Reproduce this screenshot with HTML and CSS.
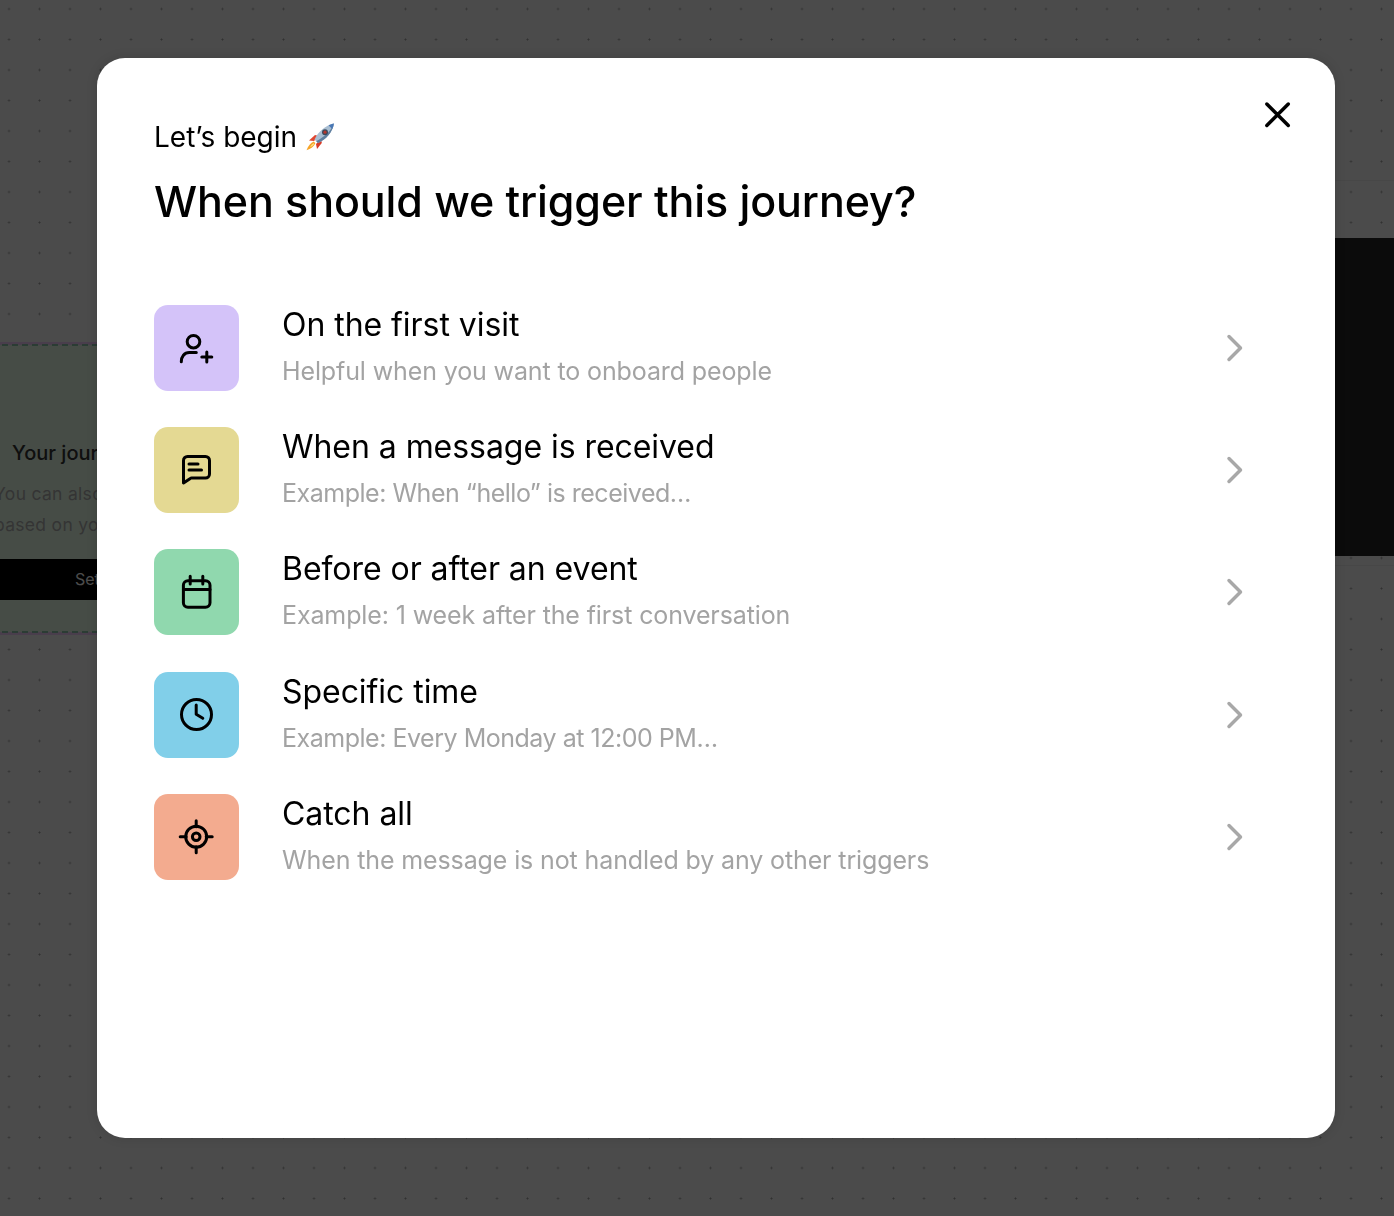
FILE: index.html
```html
<!DOCTYPE html>
<html lang="en">
<head>
    <meta charset="UTF-8">
    <meta name="viewport" content="width=device-width, initial-scale=1.0">
    <title>Journey trigger</title>
    <link rel="stylesheet" href="styles.css">
</head>
<body>
    <!-- Canvas behind the dialog -->
    <div class="canvas">
        <div class="journey-card">
            <h3>Your journey</h3>
            <p>You can also</p>
            <p class="second">based on your</p>
            <div class="setup-button">Set</div>
        </div>
        <div class="side-panel">
            <div class="side-panel-dark"></div>
        </div>
    </div>

    <div class="overlay">
        <div class="modal">
            <button class="close-button" aria-label="Close">
                <svg width="32" height="32" viewBox="0 0 32 32"><path d="M4.800 5l21.500 21.500M26.300 5L4.800 26.500"/></svg>
            </button>

            <p class="eyebrow">
                Let’s begin
                <svg class="rocket" width="30" height="30" viewBox="0 0 30 30">
                    <path d="M4 18.500l6-5.500 4 1-5 5z" fill="#e0452f"/>
                    <path d="M12 27l4.800-6 -.8-4-5 5z" fill="#d83b28"/>
                    <path d="M8.800 19.500c-3 1.300-5.800 4.300-7.300 8.800 4.300-1.200 7.500-4 8.900-7z" fill="#f7a428"/>
                    <path d="M8.700 21.300c-1.500.8-2.700 2-3.500 3.700 1.800-.7 3.100-1.800 3.900-3.100z" fill="#fde68a"/>
                    <path d="M9.500 17.500C13 10 20 3.500 29 1.500 27.500 10.500 21 17.500 13 21z" fill="#a9bed2"/>
                    <path d="M13 21c8-3.500 14.500-10.500 16-19.500-2 6-8 12.500-17.800 17.700z" fill="#5f7f9f"/>
                    <path d="M23.500 3.200c1.500-.7 3.700-1.300 5.500-1.700-.4 2-1 3.800-1.800 5.500z" fill="#4a78b5"/>
                    <circle cx="20" cy="10.200" r="3" fill="#3b4a5c"/>
                    <circle cx="20" cy="10.200" r="1.600" fill="#b5362c"/>
                </svg>
            </p>
            <h1>When should we trigger this journey?</h1>

            <div class="trigger-list">
                <a class="trigger" href="#">
                    <span class="trigger-icon purple">
                        <svg width="36" height="36" viewBox="0 0 36 36"><circle cx="15.500" cy="11.700" r="6.300"/><path d="M3.300 31.700c0-5 3-9.200 8-9.200h7M28.800 22v10M23.800 27h10"/></svg>
                    </span>
                    <span class="trigger-text">
                        <span class="trigger-title">On the first visit</span>
                        <span class="trigger-sub">Helpful when you want to onboard people</span>
                    </span>
                    <svg class="chevron" width="18" height="28" viewBox="0 0 18 28"><path d="M3 2.500l11.500 11.500L3 25.500"/></svg>
                </a>
                <a class="trigger" href="#">
                    <span class="trigger-icon yellow">
                        <svg width="36" height="36" viewBox="0 0 36 36"><path d="M5.500 31V8.500a4 4 0 0 1 4-4h18a4 4 0 0 1 4 4V22a4 4 0 0 1-4 4H13.500a2 2 0 0 0-1.200.4L5.500 31zM11 12h9M11 18h12.500"/></svg>
                    </span>
                    <span class="trigger-text">
                        <span class="trigger-title">When a message is received</span>
                        <span class="trigger-sub tight">Example: When “hello” is received…</span>
                    </span>
                    <svg class="chevron" width="18" height="28" viewBox="0 0 18 28"><path d="M3 2.500l11.500 11.500L3 25.500"/></svg>
                </a>
                <a class="trigger" href="#">
                    <span class="trigger-icon green">
                        <svg width="36" height="36" viewBox="0 0 36 36"><rect x="5.400" y="6.800" width="26.600" height="26.400" rx="4.500"/><path d="M12.200 2.200V10M24.800 2.200V10M5.400 15.500h26.600"/></svg>
                    </span>
                    <span class="trigger-text">
                        <span class="trigger-title">Before or after an event</span>
                        <span class="trigger-sub">Example: 1 week after the first conversation</span>
                    </span>
                    <svg class="chevron" width="18" height="28" viewBox="0 0 18 28"><path d="M3 2.500l11.500 11.500L3 25.500"/></svg>
                </a>
                <a class="trigger" href="#">
                    <span class="trigger-icon blue">
                        <svg width="36" height="36" viewBox="0 0 36 36"><circle cx="18.500" cy="17.500" r="15"/><path d="M18.200 8v9.300l6.600 4"/></svg>
                    </span>
                    <span class="trigger-text">
                        <span class="trigger-title">Specific time</span>
                        <span class="trigger-sub tight">Example: Every Monday at 12:00 PM…</span>
                    </span>
                    <svg class="chevron" width="18" height="28" viewBox="0 0 18 28"><path d="M3 2.500l11.500 11.500L3 25.500"/></svg>
                </a>
                <a class="trigger" href="#">
                    <span class="trigger-icon orange">
                        <svg width="36" height="36" viewBox="0 0 36 36"><circle cx="18.200" cy="17.700" r="10.500"/><circle cx="18.200" cy="17.700" r="3.800"/><path d="M18.200 1.700v6M18.200 27.700v6M2.200 17.700h6M28.200 17.700h6"/></svg>
                    </span>
                    <span class="trigger-text">
                        <span class="trigger-title">Catch all</span>
                        <span class="trigger-sub">When the message is not handled by any other triggers</span>
                    </span>
                    <svg class="chevron" width="18" height="28" viewBox="0 0 18 28"><path d="M3 2.500l11.500 11.500L3 25.500"/></svg>
                </a>
            </div>
        </div>
    </div>
</body>
</html>
```

FILE: styles.css
```css
* {
    box-sizing: border-box;
}
html, body {
    height: 100%;
}
body {
    margin: 0;
    overflow: hidden;
    font-family: Inter, "Liberation Sans", sans-serif;
    color: #000;
    background-color: #fbfbfb;
    background-image: radial-gradient(circle, #a4a4a4 0.8px, transparent 1.2px);
    background-size: 30.5px 30.5px;
    background-position: -6.25px -6.25px;
}

/* Things on the canvas, seen through the overlay */
.canvas {
    position: fixed;
    inset: 0;
}
.journey-card {
    position: absolute;
    left: -70px;
    top: 342px;
    width: 400px;
    height: 293px;
    padding: 96px 0 0 79px;
    background-color: #ecffec;
    border: 3px solid #f5d0ff;
    outline: 2px dashed #90c8b0;
    outline-offset: -4px;
}
.journey-card h3 {
    margin: 0 0 13px;
    font-size: 20px;
    font-weight: 500;
    color: #333;
}
.journey-card p {
    margin: 0 0 0 -18px;
    font-size: 17.500px;
    line-height: 31px;
    letter-spacing: 0.3px;
    color: #b0b0b0;
}
.setup-button {
    margin: 19px 0 0 -79px;
    height: 41px;
    padding-left: 142px;
    font-size: 16px;
    line-height: 41px;
    color: #fff;
    background-color: #000;
}
.side-panel {
    position: absolute;
    left: 1200px;
    top: 180px;
    right: 0;
    height: 386px;
    padding-top: 57px;
    border-top: 1px solid #eee;
    border-bottom: 1px solid #eee;
}
.side-panel-dark {
    height: 318px;
    background-color: #262626;
}

.overlay {
    position: fixed;
    inset: 0;
    padding: 58px 59px 78px 97px;
    background-color: rgba(0, 0, 0, 0.7);
}
.modal {
    position: relative;
    height: 100%;
    padding: 60px 57px 0;
    background-color: #fff;
    border-radius: 28px;
    box-shadow: 0 0 12px rgba(0, 0, 0, 0.12);
}
.close-button {
    position: absolute;
    top: 41px;
    right: 41px;
    padding: 0;
    border: none;
    background: none;
    line-height: 0;
    cursor: pointer;
}
.close-button path {
    fill: none;
    stroke: #000;
    stroke-width: 3.5;
    stroke-linecap: round;
}

.eyebrow {
    display: flex;
    align-items: center;
    gap: 8px;
    height: 38px;
    margin: 0;
    font-size: 28px;
}
h1 {
    margin: 14px 0 0;
    font-size: 43px;
    line-height: 62px;
    font-weight: 500;
    letter-spacing: -0.1px;
}

.trigger-list {
    display: flex;
    flex-direction: column;
    gap: 36.2px;
    margin-top: 73px;
}
.trigger {
    display: flex;
    align-items: center;
    height: 86px;
    color: inherit;
    text-decoration: none;
}
.trigger-icon {
    display: flex;
    justify-content: center;
    align-items: center;
    flex: none;
    width: 85px;
    height: 86px;
    border-radius: 14px;
}
.trigger-icon svg {
    margin-right: 2px;
    fill: none;
    stroke: #000;
    stroke-width: 3;
    stroke-linecap: round;
    stroke-linejoin: round;
}
.purple { background-color: #d4c3f9; }
.yellow { background-color: #e4d993; }
.green { background-color: #90d8ae; }
.blue { background-color: #81cfe9; }
.orange { background-color: #f3ab8f; }

.trigger-text {
    display: flex;
    flex-direction: column;
    flex: 1;
    gap: 8px;
    margin-left: 43px;
}
.trigger-title {
    font-size: 32px;
    line-height: 38px;
    letter-spacing: -0.05px;
}
.trigger-sub {
    font-size: 25px;
    line-height: 38px;
    letter-spacing: -0.12px;
    color: #a3a3a3;
}
.trigger-sub.tight {
    letter-spacing: -0.48px;
}
.chevron {
    flex: none;
    margin-right: 34px;
    fill: none;
    stroke: #a8a8a8;
    stroke-width: 3.5;
    stroke-linecap: round;
    stroke-linejoin: round;
}
```
